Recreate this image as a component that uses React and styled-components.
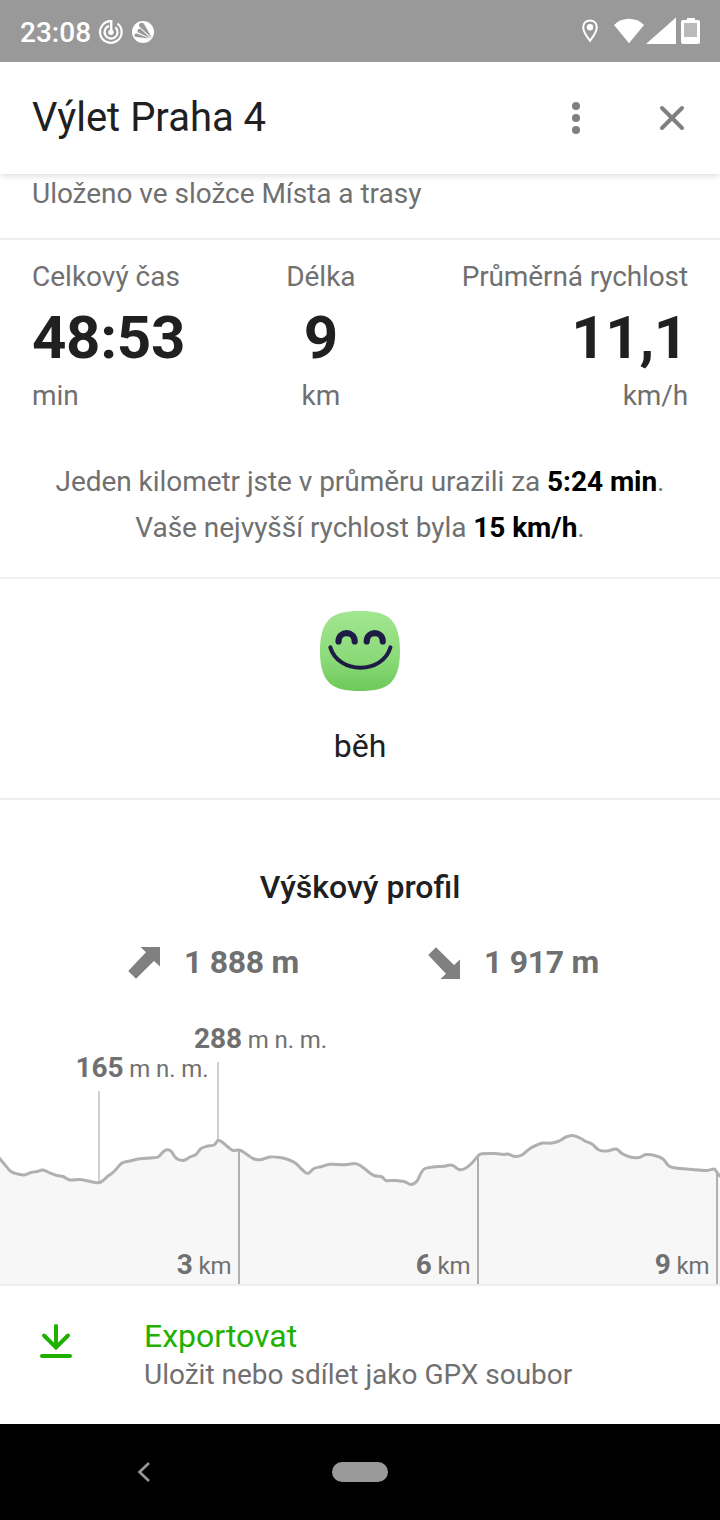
import React from "react";
import styled, { createGlobalStyle } from "styled-components";

const GlobalStyle = createGlobalStyle`
  * {
    box-sizing: border-box;
  }
  body {
    margin: 0;
    background: #fff;
    font-family: Roboto, sans-serif;
  }
`;

const Screen = styled.div`
  width: 720px;
  height: 1520px;
  display: flex;
  flex-direction: column;
  overflow: hidden;
  background: #fff;
  color: #707070;
  font-size: 28px;
  svg {
    display: block;
    flex-shrink: 0;
  }
`;

const StatusBar = styled.div`
  height: 62px;
  flex-shrink: 0;
  display: flex;
  align-items: center;
  padding: 1px 19px 0 20px;
  background: #999;
  color: #fff;
  z-index: 2;
`;

const Clock = styled.span`
  width: 78px;
  padding-top: 2px;
  font-weight: 500;
  line-height: 32px;
`;

const AppIcon = styled.svg`
  margin-left: 7px;
`;

const StatusIcons = styled.div`
  display: flex;
  margin-left: auto;
`;

const Header = styled.header`
  height: 112px;
  flex-shrink: 0;
  display: flex;
  align-items: center;
  padding: 0 32px;
  background: #fff;
  box-shadow: 0 1px 8px rgba(0, 0, 0, 0.16);
  z-index: 1;
`;

const Title = styled.h1`
  margin: 0 auto 0 0;
  font-size: 40px;
  font-weight: 400;
  line-height: 48px;
  color: #202020;
`;

const IconButton = styled.button`
  display: flex;
  padding: 0;
  margin-left: ${(props) => props.$gap || 0};
  border: none;
  background: none;
`;

const Section = styled.section`
  height: ${(props) => props.$height};
  flex-shrink: 0;
  border-bottom: 2px solid #efefef;
`;

const Folder = styled.p`
  margin: 0;
  padding: 4px 32px 0;
  line-height: 32px;
  letter-spacing: -0.03px;
`;

const Stats = styled.div`
  display: flex;
  justify-content: space-between;
  padding: 20px 32px 0;
`;

const Stat = styled.div`
  padding-right: ${(props) => (props.$align === "center" ? "5px" : 0)};
  text-align: ${(props) => props.$align};
  letter-spacing: ${(props) => (props.$align === "right" ? "-0.12px" : 0)};
  line-height: 33px;
  white-space: nowrap;
`;

const StatValue = styled.div`
  height: 86px;
  font-size: 60px;
  font-weight: 700;
  line-height: 90px;
  letter-spacing: -0.3px;
  color: #202020;
`;

const Summary = styled.p`
  margin: 47px 0 0;
  text-align: center;
  line-height: 46px;
  letter-spacing: -0.05px;
  strong {
    color: #000;
  }
`;

const Activity = styled.div`
  display: flex;
  flex-direction: column;
  align-items: center;
  gap: 36px;
  padding-top: 32px;
  font-size: 32px;
  line-height: 38px;
  color: #202020;
`;

const ProfileTitle = styled.h2`
  margin: 0;
  padding-top: 68px;
  text-align: center;
  font-size: 32px;
  font-weight: 500;
  line-height: 38px;
  color: #202020;
`;

const Climbs = styled.div`
  height: 114px;
  display: grid;
  grid-template-columns: 300px 300px;
  padding: 38px 0 0 128px;
`;

const Climb = styled.div`
  display: flex;
  gap: 24px;
  font-size: 32px;
  font-weight: 700;
  line-height: 36px;
  letter-spacing: -0.3px;
  svg {
    margin-top: 3px;
  }
`;

const ChartText = styled.text`
  font-size: 24px;
  letter-spacing: -0.1px;
  fill: #707070;
  tspan {
    font-size: 28px;
    font-weight: 700;
  }
`;

const Export = styled.div`
  height: 138px;
  flex-shrink: 0;
  display: flex;
  padding: 30px 40px;
`;

const ExportText = styled.div`
  margin-left: 72px;
  line-height: 38px;
`;

const ExportTitle = styled.div`
  font-size: 32px;
  line-height: 40px;
  color: #1eb100;
`;

const NavBar = styled.nav`
  height: 96px;
  flex-shrink: 0;
  display: flex;
  align-items: center;
  padding-left: 137px;
  background: #000;
`;

const HomePill = styled.div`
  width: 56px;
  height: 20px;
  margin-left: 181px;
  border-radius: 10px;
  background: #999;
`;

const CHART_HEIGHT = 264;

const profile = [
  [-4, 134], [0, 139], [3, 142.5], [11, 151.5], [18, 154], [24, 155], [31, 152.5],
  [37, 151.5], [43, 150], [50, 153], [57, 155.5], [63, 156.5], [70, 160], [80, 159.5],
  [88, 161], [98, 162.8], [103, 160.5], [108, 156], [114, 151.5], [122, 143],
  [130, 141], [140, 138.8], [150, 138], [158, 137], [163, 132], [167, 129.8],
  [171, 131], [176, 138], [183, 140.5], [190, 137], [196, 134.5], [201, 128.5],
  [207, 126.3], [214, 125], [218, 120.5], [222, 122], [228, 127], [233, 130.5],
  [240, 130.2], [247, 134.5], [253, 138.5], [260, 139.8], [270, 137], [280, 137.5],
  [288, 139.5], [296, 143.5], [302, 149.5], [308, 153.5], [314, 148.5], [322, 146.5],
  [330, 144.2], [345, 144.8], [355, 143.5], [361, 146], [368, 151.5], [374, 155.5],
  [382, 157], [386, 160.5], [395, 160.5], [404, 161.5], [411, 164.5], [417, 161],
  [421, 153], [425, 148.5], [433, 147], [443, 146.3], [452, 145.2], [459, 149.5],
  [465, 148.5], [472, 143], [478, 136], [482, 133.8], [495, 133.5], [503, 134.5],
  [508, 134], [515, 136.5], [522, 135], [530, 128.5], [537, 125], [543, 123],
  [550, 123.2], [558, 121.5], [566, 117], [573, 115.5], [580, 118], [586, 121.5],
  [592, 124], [599, 130], [607, 131], [616, 129], [622, 133.5], [630, 137],
  [639, 137.5], [646, 134.5], [655, 135.5], [663, 139], [669, 146], [676, 148],
  [690, 149.3], [707, 150.5], [714, 149], [717, 152.5], [721, 157], [726, 160],
];

const kilometres = [
  { km: 3, x: 239, top: 131 },
  { km: 6, x: 478, top: 137 },
  { km: 9, x: 717, top: 153 },
];

const peaks = [
  { height: 165, x: 99, top: 71, bottom: 162, labelX: 75.5, labelY: 57 },
  { height: 288, x: 218, top: 42, bottom: 120, labelX: 194, labelY: 28 },
];

// Catmull-Rom through all the points
function smoothLine(points) {
  let d = `M${points[0][0]} ${points[0][1]}`;
  for (let i = 0; i < points.length - 1; i++) {
    const p0 = points[i - 1] || points[i];
    const p1 = points[i];
    const p2 = points[i + 1];
    const p3 = points[i + 2] || p2;
    d += ` C${p1[0] + (p2[0] - p0[0]) / 6} ${p1[1] + (p2[1] - p0[1]) / 6}`;
    d += ` ${p2[0] - (p3[0] - p1[0]) / 6} ${p2[1] - (p3[1] - p1[1]) / 6}`;
    d += ` ${p2[0]} ${p2[1]}`;
  }
  return d;
}

function ElevationChart() {
  const line = smoothLine(profile);
  return (
    <svg width="720" height={CHART_HEIGHT} viewBox={`0 0 720 ${CHART_HEIGHT}`}>
      <path d={`${line} V${CHART_HEIGHT} H-4 Z`} fill="#f7f7f7" />
      {peaks.map((peak) => (
        <g key={peak.height}>
          <path d={`M${peak.x} ${peak.top} V${peak.bottom}`} stroke="#d0d0d0" strokeWidth="2" />
          <ChartText x={peak.labelX} y={peak.labelY}>
            <tspan>{peak.height}</tspan> m n. m.
          </ChartText>
        </g>
      ))}
      {kilometres.map((mark) => (
        <g key={mark.km}>
          <path d={`M${mark.x} ${mark.top} V${CHART_HEIGHT}`} stroke="#b0b0b0" strokeWidth="2" />
          <ChartText x={mark.x - 7.5} y="254" textAnchor="end">
            <tspan>{mark.km}</tspan> km
          </ChartText>
        </g>
      ))}
      <path d={line} fill="none" stroke="#b0b0b0" strokeWidth="3" />
    </svg>
  );
}

function SpiralIcon() {
  return (
    <svg width="26" height="26" viewBox="0 0 26 26" fill="none" stroke="#fff">
      <path d="M13.5 2.2A10.8 10.8 0 1 0 19.500 4.500" strokeWidth="2.2" />
      <path d="M11 6.9A6.5 6.5 0 1 0 17.4 8.2" strokeWidth="2.2" />
      <path d="M13.2 1V13" strokeWidth="2.4" />
      <circle cx="13" cy="13.2" r="2.7" fill="#fff" stroke="none" />
    </svg>
  );
}

function AvastIcon() {
  return (
    <AppIcon width="24" height="24" viewBox="0 0 24 24">
      <circle cx="12" cy="12" r="11" fill="#fff" />
      <g fill="#999">
        <path d="M21 18L8.800 7C7.200 5.200 7.800 3.600 9.600 2.900C11.400 2.300 12.800 3.200 13.600 5Z" />
        <path d="M19.500 18.200L7.800 12.800C6.200 11.900 6 10.200 7.200 9.200C8.400 8.400 9.600 8.800 10.600 9.800Z" />
        <path d="M18.500 18.600L5.200 17C3.600 16.800 3 15.600 3.600 14.400C4.200 13.600 5.400 13.400 6.600 13.800Z" />
      </g>
    </AppIcon>
  );
}

function Smiley() {
  return (
    <svg width="80" height="80" viewBox="0 0 80 80">
      <defs>
        <linearGradient id="skin" x1="0" y1="0" x2="0" y2="1">
          <stop offset="0" stopColor="#a1e690" />
          <stop offset="0.6" stopColor="#8bda79" />
          <stop offset="1" stopColor="#6dc859" />
        </linearGradient>
      </defs>
      <path
        d="M40 0C54 0 65 2 71 8.5C78 16 80 27 80 40C80 53 78 64 71 71.5C65 78 54 80 40 80C26 80 15 78 9 71.5C2 64 0 53 0 40C0 27 2 16 9 8.5C15 2 26 0 40 0Z"
        fill="url(#skin)"
      />
      <g fill="none" stroke="#1e1b45" strokeLinecap="round">
        <path d="M18.500 30.500C18.500 19.300 34.700 19.300 34.700 30.500" strokeWidth="6.200" />
        <path d="M46.700 30.500C46.700 19.300 62.800 19.300 62.800 30.500" strokeWidth="6.200" />
        <path d="M10.300 36.300C18.500 63.500 62.500 63.500 70.500 36.300" strokeWidth="4" />
      </g>
    </svg>
  );
}

function App() {
  return (
    <Screen>
      <GlobalStyle />
      <StatusBar>
        <Clock>23:08</Clock>
        <SpiralIcon />
        <AvastIcon />
        <StatusIcons>
          <svg width="120" height="29" viewBox="0 0 120 29" fill="#fff">
            <path
              d="M9 3.500C4.800 3.500 2.200 6.500 2.200 10.500C2.200 15 6.500 20.500 9 23.800C11.500 20.500 15.800 15 15.800 10.500C15.800 6.500 13.200 3.500 9 3.500Z"
              fill="none"
              stroke="#fff"
              strokeWidth="2"
            />
            <circle cx="9" cy="10.300" r="3.200" />
            <path d="M33 8C41.500 -0.500 54.500 -0.500 63 8L48 26.300Z" />
            <path d="M65 27L95 0.500V27Z" />
            <path d="M106 1h8v2h3q2 0 2 2V25q0 2-2 2h-15q-2 0-2-2V5q0-2 2-2h4Z" />
            <path d="M103 6h13v14h-13Z" fill="#bababa" />
          </svg>
        </StatusIcons>
      </StatusBar>

      <Header>
        <Title>Výlet Praha 4</Title>
        <IconButton aria-label="Další">
          <svg width="8" height="32" viewBox="0 0 8 32" fill="#808080">
            <circle cx="4" cy="4" r="4" />
            <circle cx="4" cy="16" r="4" />
            <circle cx="4" cy="28" r="4" />
          </svg>
        </IconButton>
        <IconButton aria-label="Zavřít" $gap="76px">
          <svg width="32" height="32" viewBox="0 0 32 32">
            <path d="M6 6L26 26M26 6L6 26" stroke="#808080" strokeWidth="4" strokeLinecap="round" />
          </svg>
        </IconButton>
      </Header>

      <Section $height="66px">
        <Folder>Uloženo ve složce Místa a trasy</Folder>
      </Section>

      <Section $height="339px">
        <Stats>
          <Stat $align="left">
            Celkový čas
            <StatValue>48:53</StatValue>
            min
          </Stat>
          <Stat $align="center">
            Délka
            <StatValue>9</StatValue>
            km
          </Stat>
          <Stat $align="right">
            Průměrná rychlost
            <StatValue>11,1</StatValue>
            km/h
          </Stat>
        </Stats>
        <Summary>
          Jeden kilometr jste v průměru urazili za <strong>5:24 min</strong>.
          <br />
          Vaše nejvyšší rychlost byla <strong>15 km/h</strong>.
        </Summary>
      </Section>

      <Section $height="221px">
        <Activity>
          <Smiley />
          běh
        </Activity>
      </Section>

      <Section $height="486px">
        <ProfileTitle>Výškový profil</ProfileTitle>
        <Climbs>
          <Climb>
            <svg width="32" height="32" viewBox="0 0 32 32" fill="#808080">
              <path d="M12.500 0H32V19.500L26 14L8 31.700L0.200 24L18 5.300Z" />
            </svg>
            1 888 m
          </Climb>
          <Climb>
            <svg width="32" height="32" viewBox="0 0 32 32" fill="#808080">
              <path d="M12.500 32H32V12.500L26 18L8 0.300L0.200 8L18 26.700Z" />
            </svg>
            1 917 m
          </Climb>
        </Climbs>
        <ElevationChart />
      </Section>

      <Export>
        <svg width="32" height="44" viewBox="0 0 32 44">
          <path
            d="M16 10V30M4 19.500L16 31.500L28 19.500M2 40H30"
            fill="none"
            stroke="#1eb100"
            strokeWidth="4"
            strokeLinecap="round"
          />
        </svg>
        <ExportText>
          <ExportTitle>Exportovat</ExportTitle>
          Uložit nebo sdílet jako GPX soubor
        </ExportText>
      </Export>

      <NavBar>
        <svg width="14" height="20" viewBox="0 0 14 20">
          <path d="M12 1L2.500 10L12 19" fill="none" stroke="#999" strokeWidth="2.600" />
        </svg>
        <HomePill />
      </NavBar>
    </Screen>
  );
}

export default App;
